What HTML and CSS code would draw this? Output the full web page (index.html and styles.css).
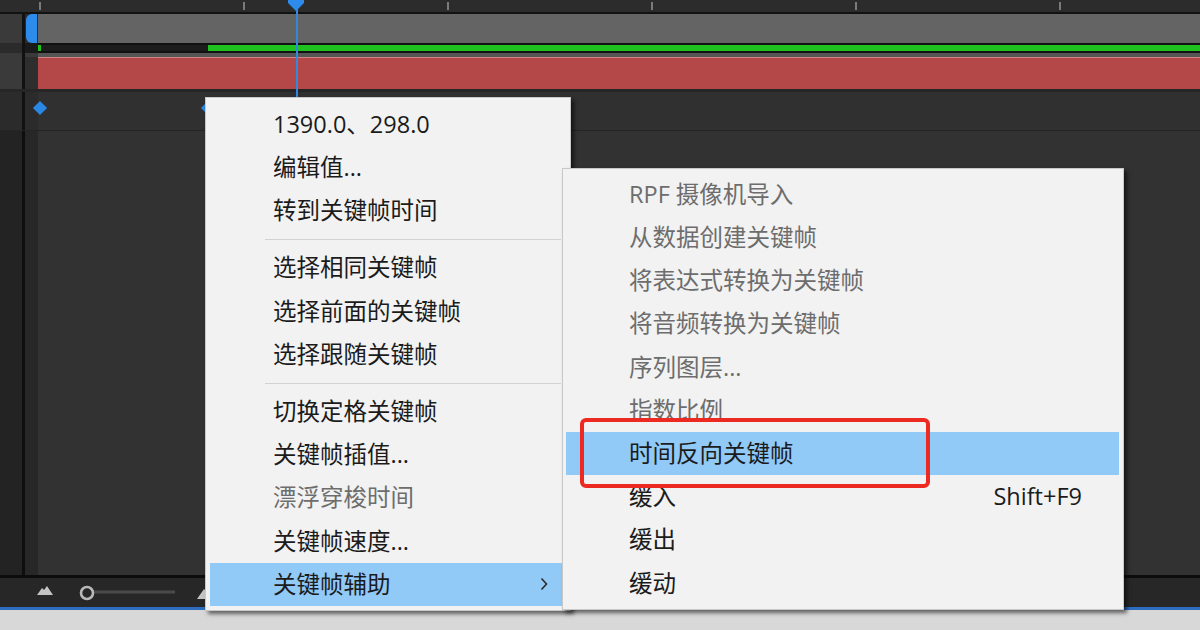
FILE: index.html
```html
<!DOCTYPE html>
<html lang="zh-CN">
<head>
<meta charset="utf-8">
<title>关键帧辅助</title>
<link rel="stylesheet" href="styles.css">
</head>
<body>
<div class="app">
  <div class="ruler"></div>
  <div class="hline"></div>
  <div class="row layer">
    <div class="lc"></div><div class="ln"></div>
    <div class="lb"><div class="handle"></div></div>
    <div class="tr"></div>
  </div>
  <div class="row greenrow">
    <div class="lc"></div><div class="ln"></div><div class="lb"></div>
    <div class="tr"><div class="gpre"></div><div class="gbar"></div></div>
  </div>
  <div class="row gaprow">
    <div class="lc"></div><div class="ln"></div><div class="lb"></div><div class="tr"></div>
  </div>
  <div class="row redrow">
    <div class="lc"></div><div class="ln"></div><div class="lb"></div><div class="tr"></div>
  </div>
  <div class="sep3"></div>
  <div class="row keys">
    <div class="lc"></div><div class="ln"></div><div class="lb"></div>
    <div class="tr">
      <span class="kf kf1"></span>
      <span class="kf kf2"></span>
    </div>
  </div>
  <div class="hline1"></div>
  <div class="row panel">
    <div class="lc"></div><div class="ln"></div><div class="lb"></div><div class="tr"></div>
  </div>
  <div class="hblack"></div>
  <div class="toolbar">
    <svg class="ico-mtn" width="16" height="9" viewBox="0 0 16 9"><polygon points="0,9 5,2 7,4 10,0 16,9" fill="#c4c4c4"/></svg>
    <svg class="ico-slider" width="96" height="18" viewBox="0 0 96 18"><line x1="14" y1="8" x2="96" y2="8" stroke="#4a4a4a" stroke-width="3"/><circle cx="8" cy="9" r="6" fill="#272727" stroke="#b9b9b9" stroke-width="2.6"/></svg>
    <svg class="ico-mtn2" width="22" height="14" viewBox="0 0 22 14"><polygon points="0,14 7,4 10,7 15,0 22,14" fill="#c4c4c4"/></svg>
  </div>
  <div class="blueline"></div>
  <div class="footer"></div>

  <div class="playhead">
    <svg class="ph-head" width="18" height="12" viewBox="0 0 18 12"><polygon points="1,0 17,0 17,3 9,11 1,3" fill="#2d8ceb"/></svg>
    <div class="ph-line"></div>
  </div>

  <div class="menu menu1">
    <div class="item">1390.0、298.0</div>
    <div class="item">编辑值...</div>
    <div class="item">转到关键帧时间</div>
    <div class="sepl"><span></span></div>
    <div class="item">选择相同关键帧</div>
    <div class="item">选择前面的关键帧</div>
    <div class="item">选择跟随关键帧</div>
    <div class="sepl"><span></span></div>
    <div class="item">切换定格关键帧</div>
    <div class="item">关键帧插值...</div>
    <div class="item dis">漂浮穿梭时间</div>
    <div class="item">关键帧速度...</div>
    <div class="item hl">关键帧辅助
      <svg class="arrow" width="8" height="14" viewBox="0 0 8 14"><polyline points="1.5,1.5 6.5,7 1.5,12.5" fill="none" stroke="#2a2a2a" stroke-width="1.6"/></svg>
    </div>
  </div>

  <div class="menu menu2">
    <div class="item dis">RPF 摄像机导入</div>
    <div class="item dis">从数据创建关键帧</div>
    <div class="item dis">将表达式转换为关键帧</div>
    <div class="item dis">将音频转换为关键帧</div>
    <div class="item dis">序列图层...</div>
    <div class="item dis">指数比例</div>
    <div class="item hl">时间反向关键帧</div>
    <div class="item">缓入<span class="sc">Shift+F9</span></div>
    <div class="item">缓出</div>
    <div class="item">缓动</div>
  </div>

  <div class="callout"></div>
</div>
</body>
</html>
```

FILE: styles.css
```css
html, body {
  margin: 0;
  padding: 0;
}
body {
  width: 1200px;
  height: 630px;
  overflow: hidden;
  background: #2f2f2f;
  font-family: "Open Sans", "Noto Sans CJK SC", sans-serif;
}
.app {
  position: relative;
  width: 1200px;
  height: 630px;
  display: flex;
  flex-direction: column;
}
.row {
  display: flex;
  flex: none;
}
.lc { width: 22px; flex: none; }
.ln { width: 3px; flex: none; background: #111; }
.lb { width: 13px; flex: none; }
.tr { flex: 1; position: relative; }

.ruler {
  height: 12px;
  flex: none;
  background-color: #2c2c2c;
  background-image: linear-gradient(to right, #7a7a7a 0 2px, transparent 2px);
  background-size: 204px 8px;
  background-position: 243px 2px;
  background-repeat: repeat-x;
}
.hline { height: 2px; flex: none; background: #121212; }

.layer { height: 29px; }
.layer .lc { background: #3a3a3a; }
.layer .lb { background: #2a2a2a; display: flex; justify-content: flex-end; }
.handle {
  width: 11px;
  margin-right: 1px;
  background: #2d8ceb;
  border-radius: 6px 0 0 6px;
}
.layer .tr { background: #646464; }

.greenrow { height: 10px; background: #111; }
.greenrow .lc { background: #2b2b2b; }
.greenrow .lb { background: #1a1a1a; }
.greenrow .tr {
  display: flex;
  padding: 2px 0 2px;
  box-sizing: border-box;
}
.gpre {
  width: 170px;
  background: #1c1c1c;
  border-left: 3px solid #1fc21f;
  box-sizing: border-box;
}
.gbar { flex: 1; background: #1ec11e; }

.gaprow { height: 4px; }
.gaprow .lc, .gaprow .lb { background: #3a3a3a; }
.gaprow .tr { background: #555; }

.redrow { height: 32px; }
.redrow .lc { background: #3a3a3a; }
.redrow .lb { background: #2e2e2e; }
.redrow .tr {
  background: #b44747;
  border-top: 1px solid #cf8583;
  box-sizing: border-box;
}

.sep3 { height: 3px; flex: none; background: #262626; }

.keys { height: 38px; }
.keys .lc, .keys .lb { background: #2b2b2b; }
.keys .tr { background: #303030; }
.kf {
  position: absolute;
  top: 11px;
  width: 10px;
  height: 10px;
  background: #2b87e4;
  transform: rotate(45deg);
}
.kf1 { left: -3px; }
.kf2 { left: 165px; }

.hline1 { height: 1px; flex: none; background: #242424; }

.row.panel { flex: 1 1 auto; }
.panel .lc { background: #232323; }
.panel .ln { background: #0e0e0e; }
.panel .lb { background: #272727; }
.panel .tr { background: #323232; }

.hblack { height: 3px; flex: none; background: #0c0c0c; }

.toolbar {
  height: 29px;
  flex: none;
  background: #272727;
  display: flex;
  align-items: center;
  padding-left: 37px;
  box-sizing: border-box;
}
.ico-mtn { margin-top: -4px; }
.ico-slider { margin-left: 26px; }
.ico-mtn2 { margin-left: 22px; margin-top: -2px; }

.blueline { height: 3px; flex: none; background: #2d6cbf; }
.footer { height: 20px; flex: none; background: #d8d8d8; }

.playhead {
  position: absolute;
  left: 287px;
  top: 0;
  width: 18px;
  height: 100px;
  display: flex;
  flex-direction: column;
  align-items: center;
}
.ph-head { position: absolute; top: 0; left: 0; }
.ph-line { width: 2px; height: 100px; background: #3587dc; margin-left: 1px; }

.menu {
  position: absolute;
  background: #f2f2f2;
  border: 1px solid #c8c8c8;
  box-shadow: 3px 3px 4px rgba(0, 0, 0, 0.55);
  box-sizing: border-box;
  font-size: 23.5px;
  color: #1b1b1b;
}
.menu1 {
  left: 205px;
  top: 97px;
  width: 366px;
  padding: 5px 4px 4px 4px;
}
.menu2 {
  left: 562px;
  top: 168px;
  width: 562px;
  padding: 4px 4px 4px 3px;
}
.item {
  height: 43.2px;
  display: flex;
  align-items: center;
  padding-left: 63px;
  padding-right: 18px;
  line-height: 1;
  white-space: nowrap;
}
.item.dis { color: #6d6d6d; }
.item.hl { background: #91c9f7; }
.arrow { margin-left: auto; }
.sc { margin-left: auto; padding-right: 19px; }
.sepl {
  height: 14px;
  display: flex;
  align-items: center;
  padding-left: 55px;
  padding-right: 5px;
}
.sepl span { flex: 1; height: 1px; background: #d2d2d2; }

.callout {
  position: absolute;
  left: 580px;
  top: 418px;
  width: 350px;
  height: 70px;
  border: 4px solid #ec2a22;
  border-radius: 6px;
  box-sizing: border-box;
}
```
